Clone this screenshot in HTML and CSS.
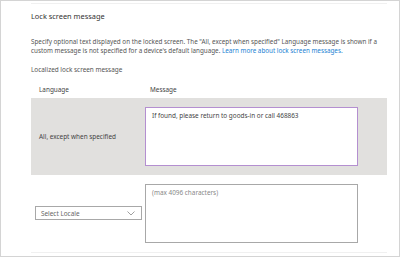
FILE: index.html
```html
<!DOCTYPE html>
<html lang="en">
<head>
  <meta charset="UTF-8">
  <title>Lock screen message</title>
  <link rel="stylesheet" href="styles.css">
</head>
<body>
  <div class="frame">
    <div class="panel">
      <h2 class="title">Lock screen message</h2>
      <p class="desc">
        <span class="line">Specify optional text displayed on the locked screen. The "All, except when specified" Language message is shown if a</span>
        <span class="line">custom message is not specified for a device's default language. <a href="#">Learn more about lock screen messages.</a></span>
      </p>
      <p class="sub">Localized lock screen message</p>

      <div class="table">
        <div class="row head">
          <div class="col-lang">Language</div>
          <div class="col-msg">Message</div>
        </div>
        <div class="row filled">
          <div class="col-lang">All, except when specified</div>
          <div class="col-msg">
            <div class="msgbox active">If found, please return to goods-in or call 468863</div>
          </div>
        </div>
        <div class="row">
          <div class="col-lang">
            <div class="select">
              <span>Select Locale</span>
              <svg width="8" height="5" viewBox="0 0 8 5"><path d="M0.5 0.5 L4 4 L7.5 0.5" fill="none" stroke="#777" stroke-width="0.7"/></svg>
            </div>
          </div>
          <div class="col-msg">
            <div class="msgbox placeholder">(max 4096 characters)</div>
          </div>
        </div>
      </div>
    </div>
  </div>
</body>
</html>
```

FILE: styles.css
```css
* {
  box-sizing: border-box;
}

body {
  margin: 0;
  font-family: "Noto Sans", "Open Sans", sans-serif;
  background: #fff;
}

.frame {
  width: 400px;
  height: 257px;
  border: 1px solid #d4d4d4;
  padding: 2px 12px 3px 30px;
}

.panel {
  height: 100%;
  border-top: 1px solid #f0f0f0;
  border-bottom: 1px solid #f0f0f0;
}

.title {
  margin: 8px 0 0;
  font-size: 7.4px;
  font-weight: normal;
  line-height: 9px;
  color: #333;
}

.desc {
  margin: 16px 0 0;
  font-size: 6.3px;
  line-height: 9.2px;
  color: #555;
}

.desc .line {
  display: block;
  white-space: nowrap;
}

.desc a {
  color: #1b82d3;
  text-decoration: none;
}

.sub {
  margin: 10px 0 0;
  font-size: 6.4px;
  line-height: 9px;
  color: #555;
}

.table {
  margin-top: 7px;
  font-size: 6.4px;
  color: #444;
}

.row {
  display: flex;
  align-items: center;
}

.head {
  height: 17px;
}

.filled {
  height: 77px;
  background: #e1e0de;
}

.row:last-child {
  height: 76px;
}

.col-lang {
  width: 114px;
  padding-left: 8px;
}

.head .col-msg {
  padding-left: 5px;
}

.msgbox {
  width: 213px;
  height: 59px;
  border: 1px solid #a8a8a8;
  background: #fff;
  padding: 3px 6px;
  line-height: 9px;
}

.msgbox.active {
  border-color: #b48fd0;
  color: #444;
}

.msgbox.placeholder {
  color: #888;
}

.select {
  width: 107px;
  height: 14px;
  margin-left: -4px;
  border: 1px solid #a8a8a8;
  display: flex;
  align-items: center;
  justify-content: space-between;
  padding: 0 6px 0 5px;
  color: #666;
}
```
